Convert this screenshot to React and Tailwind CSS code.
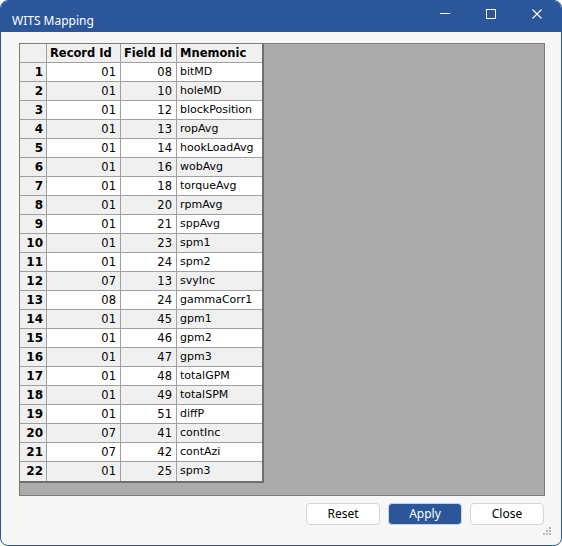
import { useState } from "react";

const rows = [
  ["01", "08", "bitMD"],
  ["01", "10", "holeMD"],
  ["01", "12", "blockPosition"],
  ["01", "13", "ropAvg"],
  ["01", "14", "hookLoadAvg"],
  ["01", "16", "wobAvg"],
  ["01", "18", "torqueAvg"],
  ["01", "20", "rpmAvg"],
  ["01", "21", "sppAvg"],
  ["01", "23", "spm1"],
  ["01", "24", "spm2"],
  ["07", "13", "svyInc"],
  ["08", "24", "gammaCorr1"],
  ["01", "45", "gpm1"],
  ["01", "46", "gpm2"],
  ["01", "47", "gpm3"],
  ["01", "48", "totalGPM"],
  ["01", "49", "totalSPM"],
  ["01", "51", "diffP"],
  ["07", "41", "contInc"],
  ["07", "42", "contAzi"],
  ["01", "25", "spm3"],
];

function TitleBar() {
  return (
    <div className="flex h-[31px] bg-[#2b579a] text-white">
      <div className="flex-1 pl-[11px] pt-[12px] text-[12px] leading-[16px] font-['Segoe_UI','Noto_Sans',sans-serif]">
        WITS Mapping
      </div>
      <div className="flex">
        <button className="flex w-[46px] h-[26px] items-start justify-center pt-[12px]">
          <svg width="10" height="1" viewBox="0 0 10 1">
            <rect width="10" height="1" fill="white" />
          </svg>
        </button>
        <button className="flex w-[46px] h-[26px] items-start justify-center pt-[8px]">
          <svg width="10" height="10" viewBox="0 0 10 10">
            <rect x="0.5" y="0.5" width="9" height="9" fill="none" stroke="white" strokeWidth="1" />
          </svg>
        </button>
        <button className="flex w-[46px] h-[26px] items-start justify-center pt-[8px] mr-[1px]">
          <svg width="10" height="10" viewBox="0 0 10 10">
            <path d="M0.5 0.5 L9.5 9.5 M9.5 0.5 L0.5 9.5" stroke="white" strokeWidth="1.1" />
          </svg>
        </button>
      </div>
    </div>
  );
}

function Grid() {
  return (
    <div className="w-[244px] border-r-2 border-b-2 border-[#6f6f6f] bg-white font-['DejaVu_Sans',sans-serif] text-[11px] leading-[18px] text-black">
      <div className="flex h-[19px] border-b border-[#a0a0a0] bg-[#f0f0f0] font-bold text-[11.5px]">
        <div className="w-[27px] border-r border-[#a0a0a0]"></div>
        <div className="w-[74px] border-r border-[#a0a0a0] pl-[3px]">Record Id</div>
        <div className="w-[56px] border-r border-[#a0a0a0] pl-[3px]">Field Id</div>
        <div className="w-[85px] pl-[3px]">Mnemonic</div>
      </div>
      {rows.map((r, idx) => (
        <div
          key={idx}
          className={`flex h-[19px] ${idx === rows.length - 1 ? "h-[18px]" : "border-b border-[#a0a0a0]"} ${idx % 2 === 0 ? "bg-white" : "bg-[#f0f0f0]"}`}
        >
          <div className="w-[27px] border-r border-[#a0a0a0] bg-[#f0f0f0] pr-[3px] text-right font-bold text-[12px]">{idx + 1}</div>
          <div className="w-[74px] border-r border-[#a0a0a0] pr-[4px] text-right text-[11.5px]">{r[0]}</div>
          <div className="w-[56px] border-r border-[#a0a0a0] pr-[4px] text-right text-[11.5px]">{r[1]}</div>
          <div className="w-[85px] pl-[3px] whitespace-nowrap">{r[2]}</div>
        </div>
      ))}
    </div>
  );
}

function Btn({ label, primary }) {
  return (
    <button
      className={`w-[74px] h-[22px] rounded-[4px] border text-[12px] font-['Segoe_UI','Noto_Sans',sans-serif] ${
        primary ? "bg-[#2b579a] border-[#c7d3e6] text-white" : "bg-white border-[#d5d5d5] text-black"
      }`}
    >
      {label}
    </button>
  );
}

export default function App() {
  const [selected] = useState(null);
  return (
    <div className="w-[562px] h-[546px] bg-white">
      <div className="relative flex flex-col w-[562px] h-[546px] rounded-[8px] border border-[#2b579a] overflow-hidden bg-[#f7f7f7]">
        <TitleBar />
        <div className="flex flex-col flex-1 pl-[18px] pr-[16px] pt-[11px]">
          <div className="h-[453px] border border-[#7b7b7b] bg-[#ababab]">
            <Grid selected={selected} />
          </div>
          <div className="flex justify-end gap-[8px] mt-[7px] mr-[1px]">
            <Btn label="Reset" />
            <Btn label="Apply" primary />
            <Btn label="Close" />
          </div>
        </div>
        {/* size grip */}
        <svg className="absolute right-[10px] bottom-[10px]" width="8" height="8" viewBox="0 0 8 8">
          <rect x="6" y="0" width="2" height="2" fill="#b9b9b9" />
          <rect x="3" y="3" width="2" height="2" fill="#b9b9b9" />
          <rect x="6" y="3" width="2" height="2" fill="#b9b9b9" />
          <rect x="0" y="6" width="2" height="2" fill="#b9b9b9" />
          <rect x="3" y="6" width="2" height="2" fill="#b9b9b9" />
          <rect x="6" y="6" width="2" height="2" fill="#b9b9b9" />
        </svg>
      </div>
    </div>
  );
}
